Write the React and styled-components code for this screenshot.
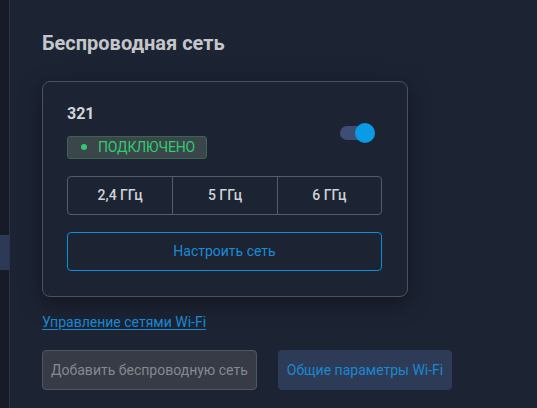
import React, { useState } from 'react'
import styled, { createGlobalStyle } from 'styled-components'

const GlobalStyle = createGlobalStyle`
    html, body {
        margin: 0;
        padding: 0;
        background: #1c2333;
    }
    body {
        font-family: Roboto, "Liberation Sans", sans-serif;
    }
`

const Layout = styled.div`
    display: flex;
    width: 537px;
    height: 408px;
    overflow: hidden;
    background: #1c2333;
`

const Sidebar = styled.div`
    width: 9px;
    flex-shrink: 0;
    background: #161b27;
    border-right: 1px solid #2a3450;
    padding-top: 235px;
    box-sizing: content-box;
`

const SideItem = styled.div`
    height: 35px;
    background: #2c3a58;
`

const Main = styled.main`
    flex: 1;
    padding: 30px 0 0 32px;
`

const Title = styled.h2`
    margin: 0 0 25px;
    font-size: 20px;
    font-weight: 700;
    line-height: 26px;
    color: #c4c6ca;
`

const Card = styled.section`
    width: 366px;
    box-sizing: border-box;
    padding: 22px 25px 25px 24px;
    border: 1px solid #4b515e;
    border-radius: 8px;
    background: #1c2333;
    box-shadow: 0 6px 22px rgba(0, 0, 0, 0.4);
`

const Header = styled.div`
    display: flex;
    align-items: center;
    justify-content: space-between;
`

const Name = styled.div`
    font-size: 16px;
    font-weight: 700;
    line-height: 19px;
    color: #d2d4d8;
    margin-bottom: 12px;
`

const Badge = styled.div`
    display: inline-flex;
    align-items: center;
    gap: 11px;
    height: 23px;
    box-sizing: border-box;
    padding: 0 11px 0 13px;
    border: 1px solid #3b6550;
    border-radius: 3px;
    background: #3a4649;
    color: #2ecc71;
    font-size: 14px;
    letter-spacing: -0.15px;
    &::before {
        content: '';
        width: 6px;
        height: 6px;
        border-radius: 50%;
        background: #2ecc71;
    }
`

const Toggle = styled.button`
    position: relative;
    width: 36px;
    height: 22px;
    margin: 3px 6px 0 0;
    padding: 0;
    border: 0;
    background: transparent;
    cursor: pointer;
    &::before {
        content: '';
        position: absolute;
        left: 0;
        top: 4px;
        width: 30px;
        height: 14px;
        border-radius: 7px;
        background: ${p => (p.$on ? '#3d4d74' : '#3a404c')};
    }
    &::after {
        content: '';
        position: absolute;
        top: 1px;
        left: ${p => (p.$on ? '15px' : '0')};
        width: 20px;
        height: 20px;
        border-radius: 50%;
        background: ${p => (p.$on ? '#0b9ae6' : '#8a8f99')};
    }
`

const Bands = styled.div`
    display: grid;
    grid-template-columns: repeat(3, 1fr);
    margin-top: 17px;
    border: 1px solid #555b67;
    border-radius: 4px;
    overflow: hidden;
`

const Band = styled.div`
    height: 37px;
    display: flex;
    align-items: center;
    justify-content: center;
    font-size: 14px;
    font-weight: 500;
    color: #d0d2d6;
    & + & {
        border-left: 1px solid #555b67;
    }
`

const OutlineButton = styled.button`
    display: block;
    width: 100%;
    height: 39px;
    margin-top: 17px;
    border: 1px solid #0b8edb;
    border-radius: 4px;
    background: transparent;
    color: #1a8bd6;
    font-family: inherit;
    font-size: 14px;
    cursor: pointer;
`

const ManageLink = styled.a`
    display: inline-block;
    margin-top: 17px;
    font-size: 14px;
    line-height: 16px;
    color: #1a88d0;
    text-decoration: underline;
    text-underline-offset: 2px;
    cursor: pointer;
`

const Actions = styled.div`
    display: flex;
    gap: 21px;
    margin-top: 19px;
`

const ActionButton = styled.button`
    height: 40px;
    padding: 0 8px;
    border-radius: 4px;
    border: 1px solid ${p => (p.$disabled ? '#50565f' : '#2e3b56')};
    background: ${p => (p.$disabled ? '#363b46' : '#2e3b56')};
    color: ${p => (p.$disabled ? '#858991' : '#1a88d0')};
    font-family: inherit;
    font-size: 14px;
    cursor: ${p => (p.$disabled ? 'default' : 'pointer')};
`

const App = () => {
    const [on, setOn] = useState(true)
    return (
        <Layout>
            <GlobalStyle />
            <Sidebar>
                <SideItem />
            </Sidebar>
            <Main>
                <Title>Беспроводная сеть</Title>
                <Card>
                    <Header>
                        <div>
                            <Name>321</Name>
                            <Badge>ПОДКЛЮЧЕНО</Badge>
                        </div>
                        <Toggle $on={on} onClick={() => setOn(!on)} aria-label="toggle" />
                    </Header>
                    <Bands>
                        <Band>2,4 ГГц</Band>
                        <Band>5 ГГц</Band>
                        <Band>6 ГГц</Band>
                    </Bands>
                    <OutlineButton>Настроить сеть</OutlineButton>
                </Card>
                <ManageLink>Управление сетями Wi-Fi</ManageLink>
                <Actions>
                    <ActionButton $disabled>Добавить беспроводную сеть</ActionButton>
                    <ActionButton>Общие параметры Wi-Fi</ActionButton>
                </Actions>
            </Main>
        </Layout>
    )
}

export default App
